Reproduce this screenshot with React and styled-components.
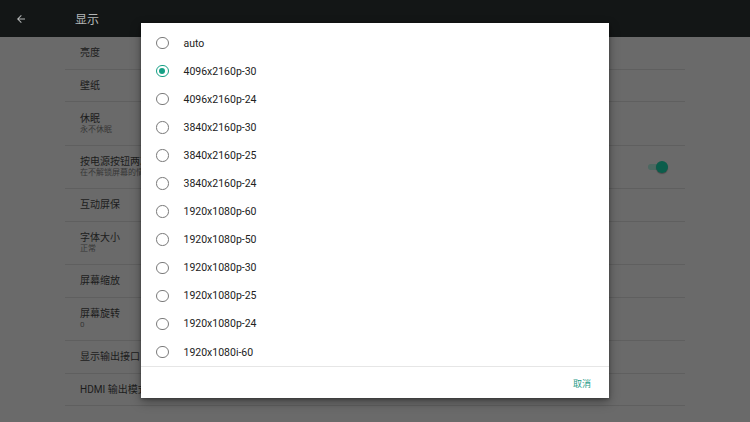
import React from "react";
import styled, { createGlobalStyle } from "styled-components";

const GlobalStyle = createGlobalStyle`
  html, body {
    margin: 0;
    padding: 0;
  }
  body {
    font-family: Roboto, "Noto Sans CJK SC", sans-serif;
  }
`;

const Screen = styled.div`
  position: relative;
  width: 750px;
  height: 422px;
  overflow: hidden;
  background: #6a6a6a;
`;

const Header = styled.div`
  height: 37px;
  display: flex;
  align-items: center;
  background: #131616;
  color: #b4b6b6;
`;

const BackButton = styled.div`
  width: 75px;
  display: flex;
  justify-content: flex-start;
  padding-left: 15px;
  box-sizing: border-box;
`;

const Title = styled.div`
  font-size: 12px;
  margin-top: -1px;
`;

const List = styled.div`
  margin: 0 65px;
`;

const Row = styled.div`
  height: ${(p) => (p.tall ? 43.5 : 32.5)}px;
  box-sizing: border-box;
  border-bottom: 1px solid #5f5f5f;
  padding: 0 16px 0 15px;
  display: flex;
  align-items: center;
  justify-content: space-between;
`;

const RowText = styled.div`
  display: flex;
  flex-direction: column;
`;

const RowTitle = styled.div`
  font-size: 10px;
  color: #1c1c1c;
  line-height: 13px;
`;

const RowSub = styled.div`
  font-size: 8px;
  color: #373737;
  line-height: 10px;
`;

const Toggle = styled.div`
  position: relative;
  width: 20px;
  height: 12px;
  margin-right: 1px;
  display: flex;
  align-items: center;
`;

const Track = styled.div`
  width: 18px;
  height: 6px;
  border-radius: 3px;
  background: #4c6861;
`;

const Thumb = styled.div`
  position: absolute;
  right: 0;
  top: 0;
  width: 12px;
  height: 12px;
  border-radius: 50%;
  background: #0b5d4b;
  box-shadow: 0 1px 1px rgba(0, 0, 0, 0.3);
`;

const Dialog = styled.div`
  position: absolute;
  left: 141px;
  top: 23px;
  width: 468px;
  height: 375px;
  background: #ffffff;
  box-shadow: 0 4px 10px rgba(0, 0, 0, 0.35), 0 1px 3px rgba(0, 0, 0, 0.3);
  display: flex;
  flex-direction: column;
`;

const Options = styled.div`
  padding-top: 6px;
  border-bottom: 1px solid #e6e6e6;
`;

const Option = styled.div`
  height: 28.1px;
  display: flex;
  align-items: center;
  padding-left: 15px;
`;

const Radio = styled.div`
  width: 10.5px;
  height: 10.5px;
  border-radius: 50%;
  border: 1.3px solid ${(p) => (p.checked ? "#16a085" : "#7a7a7a")};
  display: flex;
  align-items: center;
  justify-content: center;
  margin-right: 15px;
  &::after {
    content: "";
    width: 6px;
    height: 6px;
    border-radius: 50%;
    background: ${(p) => (p.checked ? "#16a085" : "transparent")};
  }
`;

const OptionLabel = styled.div`
  font-size: 10.5px;
  color: #222222;
`;

const Actions = styled.div`
  flex: 1;
  display: flex;
  align-items: center;
  justify-content: flex-end;
  padding-right: 18px;
`;

const TextButton = styled.div`
  font-size: 9px;
  color: #1f9c88;
  margin-top: 1px;
`;

const rows = [
  { title: "亮度" },
  { title: "壁纸" },
  { title: "休眠", sub: "永不休眠" },
  { title: "按电源按钮两次", sub: "在不解锁屏幕的情况下", toggle: true },
  { title: "互动屏保" },
  { title: "字体大小", sub: "正常" },
  { title: "屏幕缩放" },
  { title: "屏幕旋转", sub: "0" },
  { title: "显示输出接口" },
  { title: "HDMI 输出模式" },
];

const modes = [
  "auto",
  "4096x2160p-30",
  "4096x2160p-24",
  "3840x2160p-30",
  "3840x2160p-25",
  "3840x2160p-24",
  "1920x1080p-60",
  "1920x1080p-50",
  "1920x1080p-30",
  "1920x1080p-25",
  "1920x1080p-24",
  "1920x1080i-60",
];

export default function App() {
  return (
    <Screen>
      <GlobalStyle />
      <Header>
        <BackButton>
          <svg width="12" height="12" viewBox="0 0 24 24" fill="#b4b6b6">
            <path d="M20 11H7.83l5.59-5.59L12 4l-8 8 8 8 1.41-1.41L7.83 13H20v-2z" />
          </svg>
        </BackButton>
        <Title>显示</Title>
      </Header>
      <List>
        {rows.map((r) => (
          <Row key={r.title} tall={!!r.sub}>
            <RowText>
              <RowTitle>{r.title}</RowTitle>
              {r.sub && <RowSub>{r.sub}</RowSub>}
            </RowText>
            {r.toggle && (
              <Toggle>
                <Track />
                <Thumb />
              </Toggle>
            )}
          </Row>
        ))}
      </List>
      <Dialog>
        <Options>
          {modes.map((m) => (
            <Option key={m}>
              <Radio checked={m === "4096x2160p-30"} />
              <OptionLabel>{m}</OptionLabel>
            </Option>
          ))}
        </Options>
        <Actions>
          <TextButton>取消</TextButton>
        </Actions>
      </Dialog>
    </Screen>
  );
}
